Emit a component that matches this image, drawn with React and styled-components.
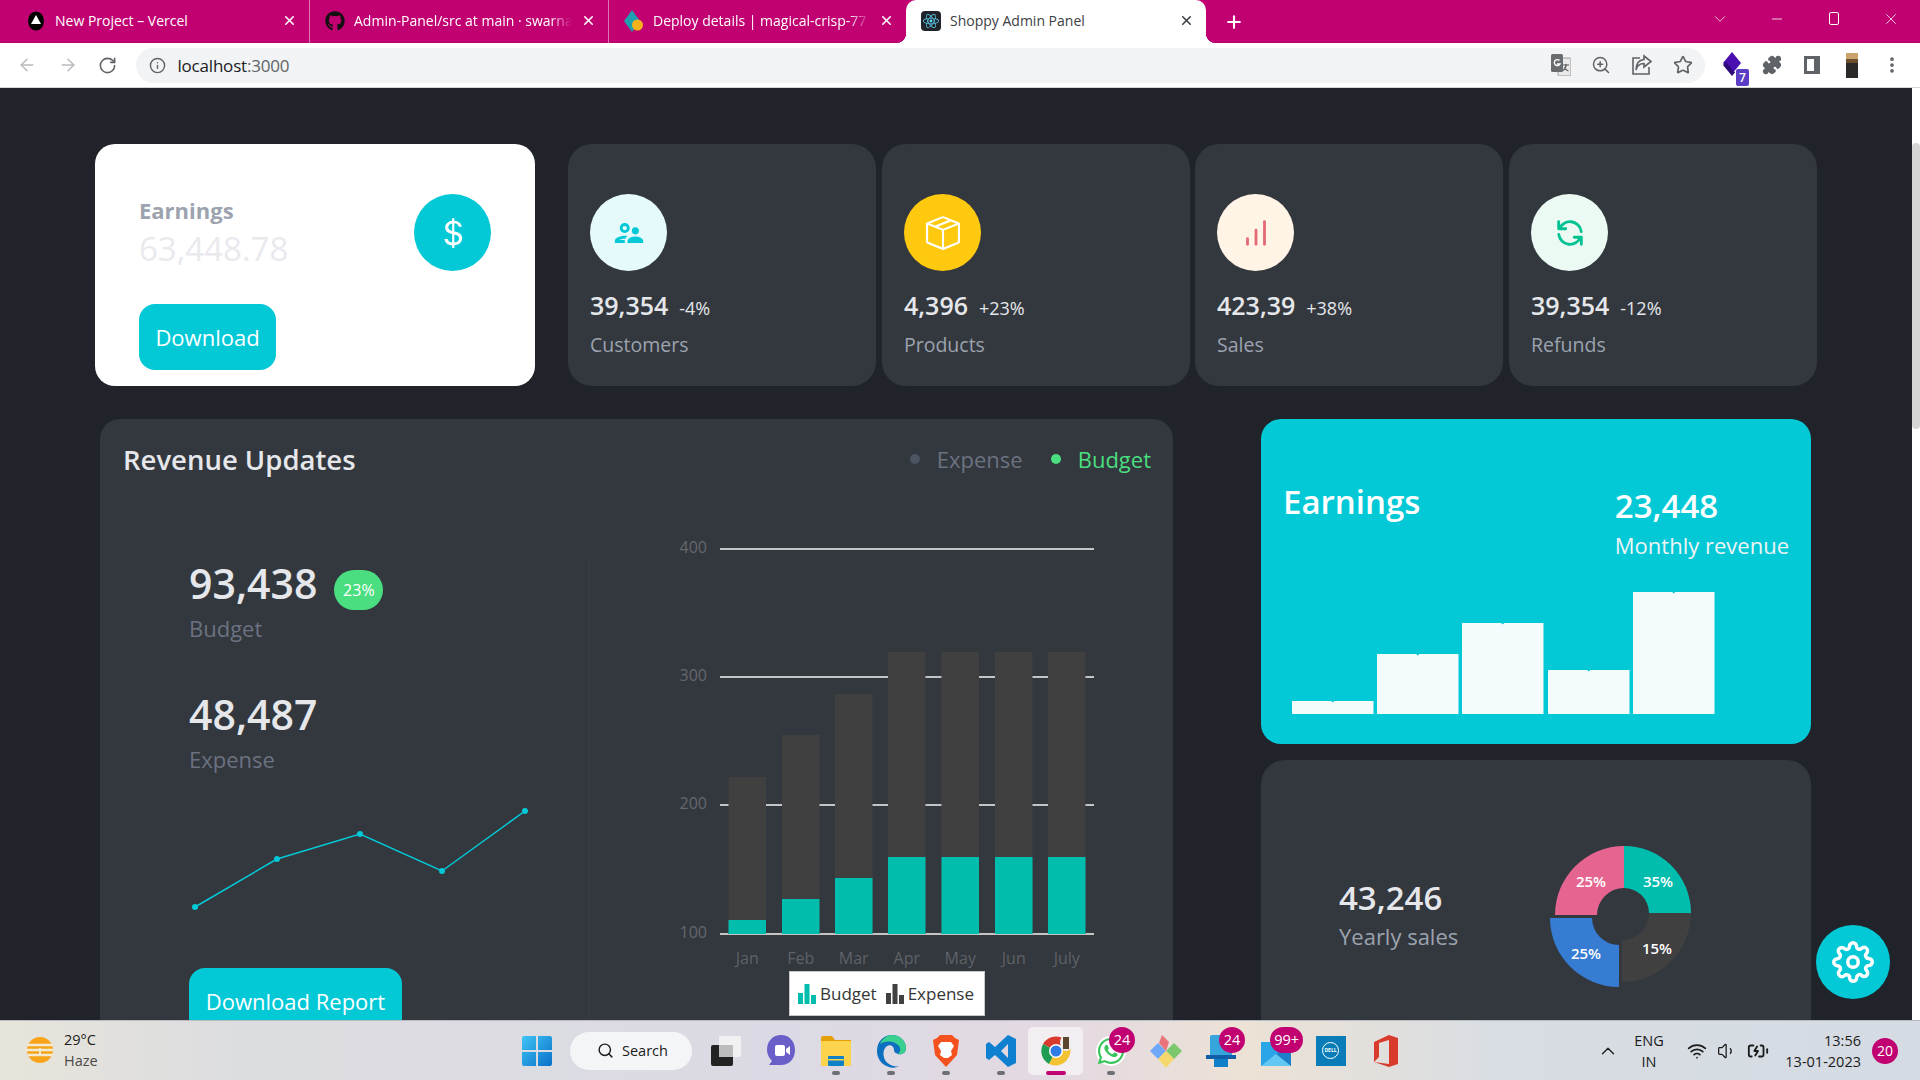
import React from "react";
import styled, { createGlobalStyle } from "styled-components";
import { BsCurrencyDollar, BsBoxSeam } from "react-icons/bs";
import { MdOutlineSupervisorAccount } from "react-icons/md";
import { FiBarChart, FiSettings } from "react-icons/fi";
import { HiOutlineRefresh } from "react-icons/hi";
import { FaGithub, FaReact, FaWhatsapp } from "react-icons/fa";
import { ArrowLeft, ArrowRight, RotateCw, Info, ZoomIn, Star, Puzzle, EllipsisVertical, Plus, X, ChevronDown, ChevronUp, Minus, Search, Wifi, Volume1, BatteryCharging } from "lucide-react";

const accent = "#03C9D7";
const panel = "#33373E";
const pageBg = "#20232A";
const magenta = "#C10172";

const GlobalStyle = createGlobalStyle`
  html, body { margin: 0; padding: 0; height: 100%; overflow: hidden; }
  body { font-family: "Open Sans", "Liberation Sans", sans-serif; background: ${pageBg}; }
  * { box-sizing: border-box; }
`;

const Screen = styled.div`
  width: 1920px;
  height: 1080px;
  display: flex;
  flex-direction: column;
  overflow: hidden;
`;

/* browser chrome */
const TabBar = styled.div`
  height: 43px;
  flex: none;
  background: ${magenta};
  display: flex;
  align-items: stretch;
  padding-left: 11px;
  color: #fff;
`;

const Tab = styled.div`
  position: relative;
  width: ${(p) => p.$w || 299}px;
  display: flex;
  align-items: center;
  padding: 0 12px 2px 15px;
  gap: 9px;
  font-size: 14px;
  background: ${(p) => (p.$active ? "#fff" : "transparent")};
  color: ${(p) => (p.$active ? "#3c4043" : "#fff")};
  border-radius: ${(p) => (p.$active ? "10px 10px 0 0" : "0")};
  border-right: ${(p) => (p.$sep ? "1px solid rgba(255,255,255,.45)" : "none")};
  ${(p) =>
    p.$active &&
    `
    &::after {
      content: "";
      position: absolute;
      right: -10px;
      bottom: 0;
      width: 10px;
      height: 10px;
      background: radial-gradient(circle at 100% 0, transparent 10px, #fff 10.5px);
    }
    &::before {
      content: "";
      position: absolute;
      left: -10px;
      bottom: 0;
      width: 10px;
      height: 10px;
      background: radial-gradient(circle at 0 0, transparent 10px, #fff 10.5px);
    }
  `}
`;

const TabTitle = styled.span`
  flex: 1;
  min-width: 0;
  white-space: nowrap;
  -webkit-mask-image: ${(p) => (p.$fade ? "linear-gradient(to right, #000 90%, transparent 100%)" : "none")};
  mask-image: ${(p) => (p.$fade ? "linear-gradient(to right, #000 90%, transparent 100%)" : "none")};
`;

const NewTab = styled.div`
  width: 56px;
  display: flex;
  align-items: center;
  justify-content: center;
`;

const WindowControls = styled.div`
  margin-left: auto;
  display: flex;
  align-items: center;
  padding: 0 1px 6px 0;
`;

const WinBtn = styled.div`
  width: 57px;
  display: flex;
  justify-content: center;
`;

const RestoreIcon = styled.div`
  width: 10px;
  height: 13px;
  border: 1px solid #fff;
  border-radius: 2px;
`;

const Toolbar = styled.div`
  height: 45px;
  flex: none;
  background: #fff;
  border-bottom: 1px solid #d6d6d6;
  display: flex;
  align-items: center;
  padding-left: 17px;
  color: #5f6368;
`;

const NavBtn = styled.div`
  width: 40.5px;
  display: flex;
  justify-content: flex-start;
  color: ${(p) => (p.$off ? "#b9bbbe" : "#5f6368")};
`;

const Omnibox = styled.div`
  width: 1569px;
  height: 35px;
  margin-left: -3px;
  border-radius: 18px;
  background: #f1f3f4;
  display: flex;
  align-items: center;
  padding: 0 11.5px 0 13px;
  gap: 12px;
`;

const Url = styled.span`
  font-size: 17px;
  color: #202124;
  letter-spacing: -0.2px;
  span { color: #5f6368; }
`;

const OmniActions = styled.div`
  margin-left: auto;
  display: flex;
  align-items: center;
  gap: 20px;
`;

const ExtBar = styled.div`
  display: flex;
  align-items: center;
  margin-left: 7.5px;
`;

const ExtSlot = styled.div`
  position: relative;
  width: 40px;
  display: flex;
  justify-content: center;
`;

const ExtCount = styled.span`
  position: absolute;
  right: 3px;
  bottom: -8px;
  width: 13px;
  height: 17px;
  background: #5b3cc4;
  color: #fff;
  font-size: 12px;
  font-weight: 600;
  line-height: 17px;
  text-align: center;
  border-radius: 2px;
`;

const SideIcon = styled.div`
  width: 16px;
  height: 18px;
  border: 3px solid #5f6368;
  border-right-width: 6px;
`;

const Avatar = styled.div`
  width: 12px;
  height: 25px;
  background: linear-gradient(180deg, #c9a36b 0 25%, #6d4f2e 25% 40%, #2b2a28 40% 100%);
`;

/* page area */
const Viewport = styled.div`
  flex: 1;
  min-height: 0;
  display: flex;
  position: relative;
`;

const Main = styled.main`
  flex: 1;
  min-width: 0;
  background: ${pageBg};
  overflow: hidden;
  padding-top: 56px;
`;

const ScrollTrack = styled.div`
  width: 8px;
  flex: none;
  background: #fff;
`;

const ScrollThumb = styled.div`
  margin-top: 55px;
  height: 286px;
  background: #d6d6d6;
  border-radius: 4px;
`;

const TopRow = styled.div`
  display: flex;
  justify-content: center;
`;

const EarnCard = styled.section`
  width: 440px;
  height: 242px;
  margin-right: 33px;
  background: #fff;
  border-radius: 20px;
  padding: 50px 44px 0;
`;

const EarnHead = styled.div`
  display: flex;
  justify-content: space-between;
  align-items: flex-start;
`;

const EarnText = styled.div`
  padding-top: 1px;
`;

const EarnLabel = styled.p`
  margin: 0;
  font-size: 22px;
  line-height: 30px;
  font-weight: 700;
  color: #9ca3af;
`;

const EarnValue = styled.p`
  margin: 0;
  font-size: 33px;
  line-height: 48px;
  color: #e9e9ee;
`;

const IconCircle = styled.div`
  width: 77px;
  height: 77px;
  border-radius: 50%;
  background: ${(p) => p.$bg};
  color: ${(p) => p.$fg};
  display: flex;
  align-items: center;
  justify-content: center;
  flex: none;
`;

const CyanButton = styled.button`
  display: block;
  height: 66px;
  width: ${(p) => p.$w}px;
  margin-top: ${(p) => p.$mt}px;
  border: 0;
  border-radius: 16px;
  background: ${accent};
  color: #fff;
  font: 400 22px "Open Sans", sans-serif;
`;

const StatCard = styled.section`
  width: 308px;
  height: 242px;
  margin-left: ${(p) => p.$ml || 0}px;
  background: ${panel};
  border-radius: 24px;
  padding: 50px 0 0 22px;
`;

const StatLine = styled.p`
  margin: 12px 0 0;
  display: flex;
  align-items: baseline;
  gap: 11px;
  color: #e5e7eb;
  height: 44px;
  line-height: 44px;
`;

const StatValue = styled.span`
  font-size: 25px;
  font-weight: 600;
`;

const StatChange = styled.span`
  font-size: 18px;
`;

const StatName = styled.p`
  margin: 1px 0 0;
  font-size: 19.5px;
  line-height: 34px;
  color: #9ca3af;
`;

const BottomRow = styled.div`
  display: flex;
  justify-content: center;
  gap: 88px;
  margin-top: 33px;
  padding-right: 1px;
`;

const RevenueCard = styled.section`
  width: 1073px;
  height: 640px;
  background: ${panel};
  border-radius: 20px;
  padding: 20px 22px 0 23px;
`;

const RevHead = styled.header`
  display: flex;
  justify-content: space-between;
  align-items: center;
  height: 40px;
`;

const RevTitle = styled.h2`
  margin: 0;
  font-size: 27.5px;
  font-weight: 600;
  color: #e5e7eb;
`;

const KeyList = styled.div`
  display: flex;
  gap: 28px;
`;

const KeyItem = styled.span`
  display: flex;
  align-items: center;
  gap: 17px;
  font-size: 22px;
  color: ${(p) => p.$color};
  &::before {
    content: "";
    width: 10px;
    height: 10px;
    border-radius: 50%;
    background: ${(p) => p.$dot};
  }
`;

const RevBody = styled.div`
  display: flex;
  margin-top: 51px;
`;

const RevLeft = styled.div`
  width: 400px;
  margin-left: 66px;
  padding-top: 25px;
`;

const Divider = styled.div`
  width: 1px;
  margin-top: 26px;
  background: #3a3e45;
`;

const FigureRow = styled.div`
  display: flex;
  align-items: center;
  gap: 17px;
`;

const Figure = styled.span`
  font-size: 41px;
  line-height: 56px;
  font-weight: 600;
  color: #e5e7eb;
`;

const Pill = styled.span`
  width: 49px;
  height: 40px;
  margin-top: 13px;
  border-radius: 20px;
  background: #4ade80;
  color: #fff;
  font-size: 16px;
  display: flex;
  align-items: center;
  justify-content: center;
`;

const FigureName = styled.p`
  margin: 0 0 ${(p) => p.$mb || 0}px;
  font-size: 22px;
  line-height: 34px;
  color: #6b7280;
`;

const Spark = styled.svg`
  display: block;
  margin-top: 24px;
`;

const ChartBox = styled.div`
  margin-left: 50px;
  display: flex;
  flex-direction: column;
`;

const ChartLegend = styled.div`
  width: 196px;
  height: 45px;
  margin-left: 149px;
  background: #fff;
  border: 1px solid #c8c8c8;
  display: flex;
  align-items: center;
  padding-left: 8px;
  gap: 9px;
  font-size: 17px;
  color: #353535;
`;

const LegendItem = styled.span`
  display: flex;
  align-items: center;
  gap: 4px;
`;

const RightCol = styled.div`
  width: 550px;
  display: flex;
  flex-direction: column;
  gap: 16px;
`;

const TealCard = styled.section`
  height: 325px;
  background: ${accent};
  border-radius: 20px;
  padding: 58px 22px 0 22px;
  color: #fff;
`;

const TealHead = styled.div`
  display: flex;
  justify-content: space-between;
`;

const TealTitle = styled.h3`
  margin: 0;
  font-size: 33px;
  line-height: 50px;
  font-weight: 600;
`;

const TealFigure = styled.p`
  margin: 6px 0 0;
  font-size: 33px;
  line-height: 46px;
  font-weight: 600;
`;

const TealCaption = styled.p`
  margin: -1px 0 0;
  font-size: 22px;
  line-height: 34px;
  color: #eef4f5;
`;

const TealBars = styled.svg`
  display: block;
  margin: 22.5px 0 0 9px;
`;

const YearCard = styled.section`
  height: 400px;
  background: ${panel};
  border-radius: 24px;
  padding: 80px 0 0 78px;
  display: flex;
  gap: 71px;
`;

const YearText = styled.div`
  width: 130px;
  padding-top: 35px;
`;

const YearFigure = styled.p`
  margin: 0;
  font-size: 33px;
  line-height: 46px;
  font-weight: 600;
  color: #e5e7eb;
`;

const YearName = styled.p`
  margin: -2px 0 0;
  font-size: 22px;
  line-height: 34px;
  color: #9ca3af;
`;

const Fab = styled.button`
  position: absolute;
  right: 30px;
  bottom: 21px;
  width: 74px;
  height: 74px;
  border: 0;
  border-radius: 50%;
  background: ${accent};
  color: #fff;
  display: flex;
  align-items: center;
  justify-content: center;
`;

/* taskbar */
const Taskbar = styled.footer`
  height: 60px;
  flex: none;
  border-top: 1px solid #b9bbc0;
  background: linear-gradient(90deg, #e7e4da 0%, #dcdde0 12%, #dbdae4 40%, #e3d9e2 55%, #ece2d5 65%, #d8dde3 78%, #d5dbe3 100%);
  display: flex;
  align-items: center;
  color: #1b1b1b;
`;

const Weather = styled.div`
  width: 522px;
  flex: none;
  display: flex;
  align-items: center;
  gap: 9px;
  padding: 0 0 1px 25px;
  font-size: 14.5px;
  line-height: 21px;
`;

const WeatherText = styled.div`
  span { color: #4a4a4a; display: block; }
`;

const SearchPill = styled.div`
  width: 122px;
  height: 38px;
  margin: 0 6px 0 18px;
  border-radius: 19px;
  background: #f4f5f7;
  display: flex;
  align-items: center;
  padding-left: 27px;
  gap: 8px;
  font-size: 14.5px;
`;

const Slot = styled.div`
  position: relative;
  width: 55px;
  height: 48px;
  flex: none;
  display: flex;
  align-items: center;
  justify-content: center;
  border-radius: 5px;
  background: ${(p) => (p.$active ? "rgba(255,255,255,.55)" : "transparent")};
`;

const RunDot = styled.span`
  position: absolute;
  left: 50%;
  bottom: 0;
  transform: translateX(-50%);
  width: ${(p) => (p.$active ? 20 : 8)}px;
  height: 4px;
  border-radius: 2px;
  background: ${(p) => (p.$active ? magenta : "#6d6f75")};
`;

const Badge = styled.span`
  position: absolute;
  top: 0;
  right: ${(p) => p.$r ?? 0}px;
  min-width: 26px;
  height: 26px;
  padding: 0 4px;
  border-radius: 13px;
  background: ${magenta};
  color: #fff;
  font-size: 14.5px;
  line-height: 26px;
  text-align: center;
`;

const Tray = styled.div`
  margin-left: auto;
  display: flex;
  align-items: center;
  padding-right: 22px;
`;

const Lang = styled.div`
  width: 44px;
  margin: 0 16px 0 8.5px;
  text-align: center;
  font-size: 14.5px;
  line-height: 21px;
`;

const TrayIcons = styled.div`
  display: flex;
  align-items: center;
  gap: 10px;
`;

const Clock = styled.div`
  width: 76px;
  margin: 0 11px 0 16px;
  text-align: right;
  font-size: 14.5px;
  line-height: 21px;
  white-space: nowrap;
`;

const CountDot = styled.span`
  width: 26px;
  height: 26px;
  border-radius: 50%;
  background: ${magenta};
  color: #fff;
  font-size: 14px;
  line-height: 26px;
  text-align: center;
`;

const months = ["Jan", "Feb", "Mar", "Apr", "May", "Jun", "July"];
const barX = [728.5, 782, 835, 888, 941.5, 995, 1048];
const expTop = [777, 735, 694, 652, 652, 652, 652];
const budTop = [920, 899, 878, 857, 857, 857, 857];
const gridY = [[400, 549], [300, 677], [200, 805], [100, 934]];
const sparkPts = [[196, 907], [278, 859], [361, 834], [443, 871], [526, 811]];
const tealBars = [[1292, 701], [1377, 654], [1462, 623], [1548, 670], [1633, 592]];

const stats = [
  { value: "39,354", change: "-4%", name: "Customers", bg: "#E5FAFB", fg: accent, icon: <MdOutlineSupervisorAccount size={34} /> },
  { value: "4,396", change: "+23%", name: "Products", bg: "#FEC90F", fg: "#fff", icon: <BsBoxSeam size={34} />, ml: 6 },
  { value: "423,39", change: "+38%", name: "Sales", bg: "#FFF4E6", fg: "#E46A76", icon: <FiBarChart size={34} />, ml: 5 },
  { value: "39,354", change: "-12%", name: "Refunds", bg: "#EBFAF2", fg: "#00C292", icon: <HiOutlineRefresh size={34} />, ml: 6 },
];

function wedge(cx, cy, r, ri, a0, a1) {
  const pt = (rad, a) => {
    const t = (a * Math.PI) / 180;
    return `${(cx + rad * Math.sin(t)).toFixed(1)} ${(cy - rad * Math.cos(t)).toFixed(1)}`;
  };
  return `M${pt(ri, a0)} L${pt(r, a0)} A${r} ${r} 0 0 1 ${pt(r, a1)} L${pt(ri, a1)} A${ri} ${ri} 0 0 0 ${pt(ri, a0)} Z`;
}

const pie = [
  { fill: "#00BDAE", d: wedge(1624, 913, 67, 25, 0, 90), x: 1658, y: 882, t: "35%" },
  { fill: "#404041", d: wedge(1622, 913, 69, 27, 90, 180), x: 1657, y: 949, t: "15%" },
  { fill: "#357CD2", d: wedge(1619, 918, 69, 27, 180, 270), x: 1586, y: 954, t: "25%" },
  { fill: "#E56590", d: wedge(1624, 915, 69, 27, 270, 360), x: 1591, y: 882, t: "25%" },
];

const BarGlyph = ({ color }) => (
  <svg width="18" height="20" viewBox="0 0 18 20">
    <rect x="0" y="9" width="5" height="11" fill={color} />
    <rect x="6.5" y="0" width="5" height="20" fill={color} />
    <rect x="13" y="11" width="5" height="9" fill={color} />
  </svg>
);

const VercelIcon = () => (
  <svg width="20" height="20" viewBox="0 0 20 20">
    <ellipse cx="10" cy="10" rx="8" ry="9.5" fill="#000" />
    <path d="M10 4l5 9H5z" fill="#fff" />
  </svg>
);

const NetlifyIcon = () => (
  <svg width="20" height="22" viewBox="0 0 20 22">
    <path d="M8 0l8 11-8 11-8-11z" fill="#1f9fb0" />
    <circle cx="13.5" cy="15" r="5.5" fill="#f5b21b" />
  </svg>
);

const ReactFavicon = styled.div`
  width: 20px;
  height: 20px;
  border-radius: 4px;
  background: #20232a;
  color: #61dafb;
  display: flex;
  align-items: center;
  justify-content: center;
`;

const ExtDiamond = () => (
  <svg width="22" height="26" viewBox="0 0 22 26">
    <path d="M11 0l9 11-9 11L2 11z" fill="#4a0fb0" />
    <path d="M2 13l9 11 3-3.5L5 10z" fill="#2c0a78" />
  </svg>
);

const TranslateIcon = () => (
  <svg width="20" height="22" viewBox="0 0 20 22">
    <rect x="7" y="4" width="13" height="18" rx="1.5" fill="#e8e8e8" stroke="#9a9a9a" />
    <rect x="0" y="0" width="12" height="18" rx="1.5" fill="#6a6d70" />
    <path d="M8.5 6.5a3 3 0 1 0 .5 3.5H6" fill="none" stroke="#fff" strokeWidth="1.4" />
    <path d="M12 11h6M15 10v1.5c0 2-1.5 4-3 5M13 13.5c1 1.5 2.5 3 4.5 3.5" fill="none" stroke="#555" strokeWidth="1.1" />
  </svg>
);

const ShareIcon = () => (
  <svg width="22" height="22" viewBox="0 0 22 22" fill="none" stroke="#5f6368" strokeWidth="1.6">
    <path d="M9 4H2v16h16v-7" />
    <path d="M13 2l7 5.5-7 5.5V9.5C9 9.5 6 12 5 16c0-6 3-10 8-10.5z" />
  </svg>
);

const WeatherIcon = () => (
  <svg width="30" height="32" viewBox="0 0 30 32">
    <circle cx="15" cy="16" r="13" fill="#f7a418" />
    <path d="M2 11h26M0 16h28M3 21h25" stroke="#f3ead2" strokeWidth="2.4" />
    <path d="M15 14v7" stroke="#f3ead2" strokeWidth="2" />
  </svg>
);

const WinLogo = () => (
  <svg width="30" height="30" viewBox="0 0 30 30">
    <defs>
      <linearGradient id="winG" x1="0" y1="0" x2="1" y2="1">
        <stop offset="0" stopColor="#3fc5f5" />
        <stop offset="1" stopColor="#0a6fc9" />
      </linearGradient>
    </defs>
    <path d="M0 2q0-2 2-2h12v14H0zM16 0h12q2 0 2 2v12H16zM0 16h14v14H2q-2 0-2-2zM16 16h14v12q0 2-2 2H16z" fill="url(#winG)" />
  </svg>
);

const TaskViewIcon = () => (
  <svg width="30" height="30" viewBox="0 0 30 30">
    <rect x="0" y="9" width="22" height="21" rx="2" fill="#222" />
    <rect x="8" y="0" width="22" height="21" rx="2" fill="#f5f5f5" fillOpacity=".85" />
    <rect x="8" y="9" width="14" height="12" fill="#bdbdbd" />
  </svg>
);

const ChatIcon = () => (
  <svg width="30" height="34" viewBox="0 0 30 34">
    <path d="M15 1c8 0 14 6 14 15s-6 15-14 15H3l3-4C3 24 1 20 1 16 1 7 7 1 15 1z" fill="#6a5fc9" />
    <rect x="9" y="11" width="10" height="11" rx="2" fill="#fff" />
    <path d="M20 15l4-3v9l-4-3z" fill="#fff" />
  </svg>
);

const FolderIcon = () => (
  <svg width="30" height="30" viewBox="0 0 30 30">
    <path d="M0 2q0-2 2-2h9l3 4h16v26H0z" fill="#e3a008" />
    <rect x="0" y="5" width="30" height="25" rx="1" fill="#fcd34d" />
    <rect x="7" y="20" width="16" height="10" rx="1" fill="#0f82c7" />
    <rect x="7" y="23" width="16" height="1.5" fill="#fcd34d" />
  </svg>
);

const EdgeIcon = () => (
  <svg width="30" height="34" viewBox="0 0 30 34">
    <path d="M1 17C1 7 8 1 16 1c8 0 14 6 14 13 0 5-4 7-8 6-3-1-4-2-4-4 0-4-4-6-7-4-5 3-5 14 2 18 3 2 7 3 10 2-3 2-7 2-10 1C6 31 1 25 1 17z" fill="#0c6fc0" />
    <path d="M16 1c8 0 14 6 14 13 0 5-4 7-8 6 3-2 3-7 0-9C17 6 8 7 4 10c2-5 7-9 12-9z" fill="#3ad08f" />
  </svg>
);

const BraveIcon = () => (
  <svg width="26" height="32" viewBox="0 0 26 32">
    <path d="M7 0h12l3 3 4 2-2 15-11 12L2 20 0 5l4-2z" fill="#f4511e" />
    <path d="M8 7h10l3 4-3 5 1 4-4 3h-4l-4-3 1-4-3-5z" fill="#fff" />
  </svg>
);

const VsCodeIcon = () => (
  <svg width="30" height="32" viewBox="0 0 30 32">
    <path d="M22 0l8 4v24l-8 4-13-12-6 5-3-2v-14l3-2 6 5zM22 9l-7 7 7 7z" fill="#0f7fd0" />
  </svg>
);

const ChromeIcon = () => (
  <svg width="32" height="36" viewBox="0 0 32 32">
    <path d="M16 16L3 9A15 15 0 0 1 29 9z" fill="#d93a2e" />
    <path d="M16 16l-7 13A15 15 0 0 1 3 9z" fill="#1f9d55" />
    <path d="M16 16l13-7a15 15 0 0 1-20 20z" fill="#f2c230" />
    <circle cx="16" cy="16" r="7" fill="#fff" />
    <circle cx="16" cy="16" r="5.5" fill="#2f7be5" />
    <ellipse cx="26" cy="8" rx="6" ry="8" fill="#efefef" />
    <rect x="23" y="2" width="6" height="12" fill="#5b4630" />
  </svg>
);

const WhatsappIcon = styled.div`
  width: 30px;
  height: 30px;
  border-radius: 50%;
  background: #fff;
  color: #38c45a;
  display: flex;
  align-items: center;
  justify-content: center;
`;

const GemIcon = () => (
  <svg width="32" height="34" viewBox="0 0 32 34">
    <path d="M8 9l8 8-8 8-8-8z" fill="#6ea8f7" />
    <path d="M12 1l7 7-3 9-7-8z" fill="#e9747c" />
    <path d="M24 9l8 8-8 8-8-8z" fill="#7bc86c" />
    <path d="M16 17l8 8-8 9-8-9z" fill="#f5d76e" />
  </svg>
);

const StoreIcon = () => (
  <svg width="30" height="32" viewBox="0 0 30 32">
    <rect x="4" y="0" width="22" height="22" rx="2" fill="#35a5dc" />
    <rect x="0" y="20" width="30" height="4" fill="#0f5fa8" />
    <rect x="8" y="24" width="14" height="8" fill="#0f7fc7" />
  </svg>
);

const MailIcon = () => (
  <svg width="30" height="30" viewBox="0 0 30 30">
    <rect x="0" y="6" width="30" height="24" fill="#2aa6e6" />
    <path d="M0 6l15 12L30 6v24z" fill="#1c7fc7" />
    <path d="M0 30l15-12 15 12z" fill="#63c7f2" />
  </svg>
);

const DellTile = styled.div`
  width: 30px;
  height: 30px;
  background: #0a7db8;
  display: flex;
  align-items: center;
  justify-content: center;
`;

const DellMark = styled.span`
  width: 17px;
  height: 17px;
  border-radius: 50%;
  border: 1px solid #fff;
  color: #fff;
  font-size: 5px;
  font-weight: 700;
  line-height: 15px;
  text-align: center;
`;

const OfficeIcon = () => (
  <svg width="24" height="32" viewBox="0 0 24 32">
    <path d="M15 0l9 3v26l-9 3-15-5 15 2V5L5 8v14l-5 5V7z" fill="#d83b2b" />
  </svg>
);

export default function App() {
  return (
    <Screen>
      <GlobalStyle />
      <TabBar>
        <Tab $sep><VercelIcon /><TabTitle>New Project – Vercel</TabTitle><X size={15} strokeWidth={2.5} /></Tab>
        <Tab $sep><FaGithub size={20} color="#111" /><TabTitle $fade>Admin-Panel/src at main · swarna</TabTitle><X size={15} strokeWidth={2.5} /></Tab>
        <Tab $w={297}><NetlifyIcon /><TabTitle $fade>Deploy details | magical-crisp-77</TabTitle><X size={15} strokeWidth={2.5} /></Tab>
        <Tab $active $w={300}><ReactFavicon><FaReact size={16} /></ReactFavicon><TabTitle>Shoppy Admin Panel</TabTitle><X size={15} strokeWidth={2.5} /></Tab>
        <NewTab><Plus size={20} strokeWidth={2.5} /></NewTab>
        <WindowControls>
          <WinBtn><ChevronDown size={18} strokeWidth={1} /></WinBtn>
          <WinBtn><Minus size={16} strokeWidth={1.2} /></WinBtn>
          <WinBtn><RestoreIcon /></WinBtn>
          <WinBtn><X size={18} strokeWidth={1} /></WinBtn>
        </WindowControls>
      </TabBar>
      <Toolbar>
        <NavBtn $off><ArrowLeft size={20} strokeWidth={1.8} /></NavBtn>
        <NavBtn $off><ArrowRight size={20} strokeWidth={1.8} /></NavBtn>
        <NavBtn><RotateCw size={19} strokeWidth={2} /></NavBtn>
        <Omnibox>
          <Info size={17} strokeWidth={2} />
          <Url>localhost<span>:3000</span></Url>
          <OmniActions>
            <TranslateIcon />
            <ZoomIn size={20} strokeWidth={1.8} />
            <ShareIcon />
            <Star size={20} strokeWidth={2} />
          </OmniActions>
        </Omnibox>
        <ExtBar>
          <ExtSlot><ExtDiamond /><ExtCount>7</ExtCount></ExtSlot>
          <ExtSlot><Puzzle size={20} fill="#5f6368" /></ExtSlot>
          <ExtSlot><SideIcon /></ExtSlot>
          <ExtSlot><Avatar /></ExtSlot>
          <ExtSlot><EllipsisVertical size={20} strokeWidth={2.5} /></ExtSlot>
        </ExtBar>
      </Toolbar>
      <Viewport>
        <Main>
          <TopRow>
            <EarnCard>
              <EarnHead>
                <EarnText>
                  <EarnLabel>Earnings</EarnLabel>
                  <EarnValue>63,448.78</EarnValue>
                </EarnText>
                <IconCircle $bg={accent} $fg="#fff"><BsCurrencyDollar size={34} /></IconCircle>
              </EarnHead>
              <CyanButton $w={137} $mt={31}>Download</CyanButton>
            </EarnCard>
            {stats.map((s) => (
              <StatCard key={s.name} $ml={s.ml}>
                <IconCircle $bg={s.bg} $fg={s.fg}>{s.icon}</IconCircle>
                <StatLine><StatValue>{s.value}</StatValue><StatChange>{s.change}</StatChange></StatLine>
                <StatName>{s.name}</StatName>
              </StatCard>
            ))}
          </TopRow>
          <BottomRow>
            <RevenueCard>
              <RevHead>
                <RevTitle>Revenue Updates</RevTitle>
                <KeyList>
                  <KeyItem $color="#6b7280" $dot="#4b5563">Expense</KeyItem>
                  <KeyItem $color="#4ade80" $dot="#4ade80">Budget</KeyItem>
                </KeyList>
              </RevHead>
              <RevBody>
                <RevLeft>
                  <FigureRow><Figure>93,438</Figure><Pill>23%</Pill></FigureRow>
                  <FigureName $mb={41}>Budget</FigureName>
                  <Figure>48,487</Figure>
                  <FigureName>Expense</FigureName>
                  <Spark width="350" height="115" viewBox="190 800 350 115">
                    <polyline points={sparkPts.map((p) => p.join(",")).join(" ")} fill="none" stroke={accent} strokeWidth="1.5" />
                    {sparkPts.map(([x, y]) => <circle key={x} cx={x} cy={y} r="3" fill={accent} />)}
                  </Spark>
                  <CyanButton $w={213} $mt={53}>Download Report</CyanButton>
                </RevLeft>
                <Divider />
                <ChartBox>
                  <svg width="470" height="441" viewBox="640 530 470 441">
                    {gridY.map(([v, y]) => (
                      <g key={v}>
                        <line x1="720" x2="1094" y1={y} y2={y} stroke="#c4c4c4" strokeWidth="2" />
                        <text x="707" y={y + 4} textAnchor="end" fontSize="16" fill="#65686c">{v}</text>
                      </g>
                    ))}
                    {barX.map((x, i) => (
                      <g key={x}>
                        <rect x={x} y={expTop[i]} width="37.5" height={934 - expTop[i]} fill="#404041" />
                        <rect x={x} y={budTop[i]} width="37.5" height={934 - budTop[i]} fill="#00BDAE" />
                        <text x={x + 18.75} y="964" textAnchor="middle" fontSize="16" fill="#5f6266">{months[i]}</text>
                      </g>
                    ))}
                  </svg>
                  <ChartLegend>
                    <LegendItem><BarGlyph color="#00BDAE" />Budget</LegendItem>
                    <LegendItem><BarGlyph color="#404041" />Expense</LegendItem>
                  </ChartLegend>
                </ChartBox>
              </RevBody>
            </RevenueCard>
            <RightCol>
              <TealCard>
                <TealHead>
                  <TealTitle>Earnings</TealTitle>
                  <div>
                    <TealFigure>23,448</TealFigure>
                    <TealCaption>Monthly revenue</TealCaption>
                  </div>
                </TealHead>
                <TealBars width="425" height="130" viewBox="1292 585 425 130">
                  {tealBars.map(([x, y]) => (
                    <g key={x}>
                      <rect x={x} y={y} width="81.5" height={714 - y} fill="#F3FBFC" />
                      <circle cx={x + 40.75} cy={y} r="1.2" fill={accent} />
                    </g>
                  ))}
                </TealBars>
              </TealCard>
              <YearCard>
                <YearText>
                  <YearFigure>43,246</YearFigure>
                  <YearName>Yearly sales</YearName>
                </YearText>
                <svg width="160" height="155" viewBox="1540 840 160 155">
                  {pie.map((w) => <path key={w.fill} d={w.d} fill={w.fill} />)}
                  {pie.map((w) => (
                    <text key={w.fill} x={w.x} y={w.y + 5} textAnchor="middle" fontSize="15" fontWeight="600" fill="#fff">{w.t}</text>
                  ))}
                </svg>
              </YearCard>
            </RightCol>
          </BottomRow>
        </Main>
        <ScrollTrack><ScrollThumb /></ScrollTrack>
        <Fab><FiSettings size={42} /></Fab>
      </Viewport>
      <Taskbar>
        <Weather>
          <WeatherIcon />
          <WeatherText>29°C<span>Haze</span></WeatherText>
        </Weather>
        <WinLogo />
        <SearchPill><Search size={17} strokeWidth={2} />Search</SearchPill>
        <Slot><TaskViewIcon /></Slot>
        <Slot><ChatIcon /></Slot>
        <Slot><FolderIcon /><RunDot /></Slot>
        <Slot><EdgeIcon /><RunDot /></Slot>
        <Slot><BraveIcon /><RunDot /></Slot>
        <Slot><VsCodeIcon /><RunDot /></Slot>
        <Slot $active><ChromeIcon /><RunDot $active /></Slot>
        <Slot><WhatsappIcon><FaWhatsapp size={30} /></WhatsappIcon><Badge $r={3}>24</Badge><RunDot /></Slot>
        <Slot><GemIcon /></Slot>
        <Slot><StoreIcon /><Badge $r={3}>24</Badge></Slot>
        <Slot><MailIcon /><Badge $r={0}>99+</Badge></Slot>
        <Slot><DellTile><DellMark>DELL</DellMark></DellTile></Slot>
        <Slot><OfficeIcon /></Slot>
        <Tray>
          <ChevronUp size={22} strokeWidth={1.4} />
          <Lang>ENG<br />IN</Lang>
          <TrayIcons>
            <Wifi size={20} strokeWidth={2} />
            <Volume1 size={20} strokeWidth={1.5} />
            <BatteryCharging size={22} strokeWidth={2} />
          </TrayIcons>
          <Clock>13:56<br />13-01-2023</Clock>
          <CountDot>20</CountDot>
        </Tray>
      </Taskbar>
    </Screen>
  );
}
